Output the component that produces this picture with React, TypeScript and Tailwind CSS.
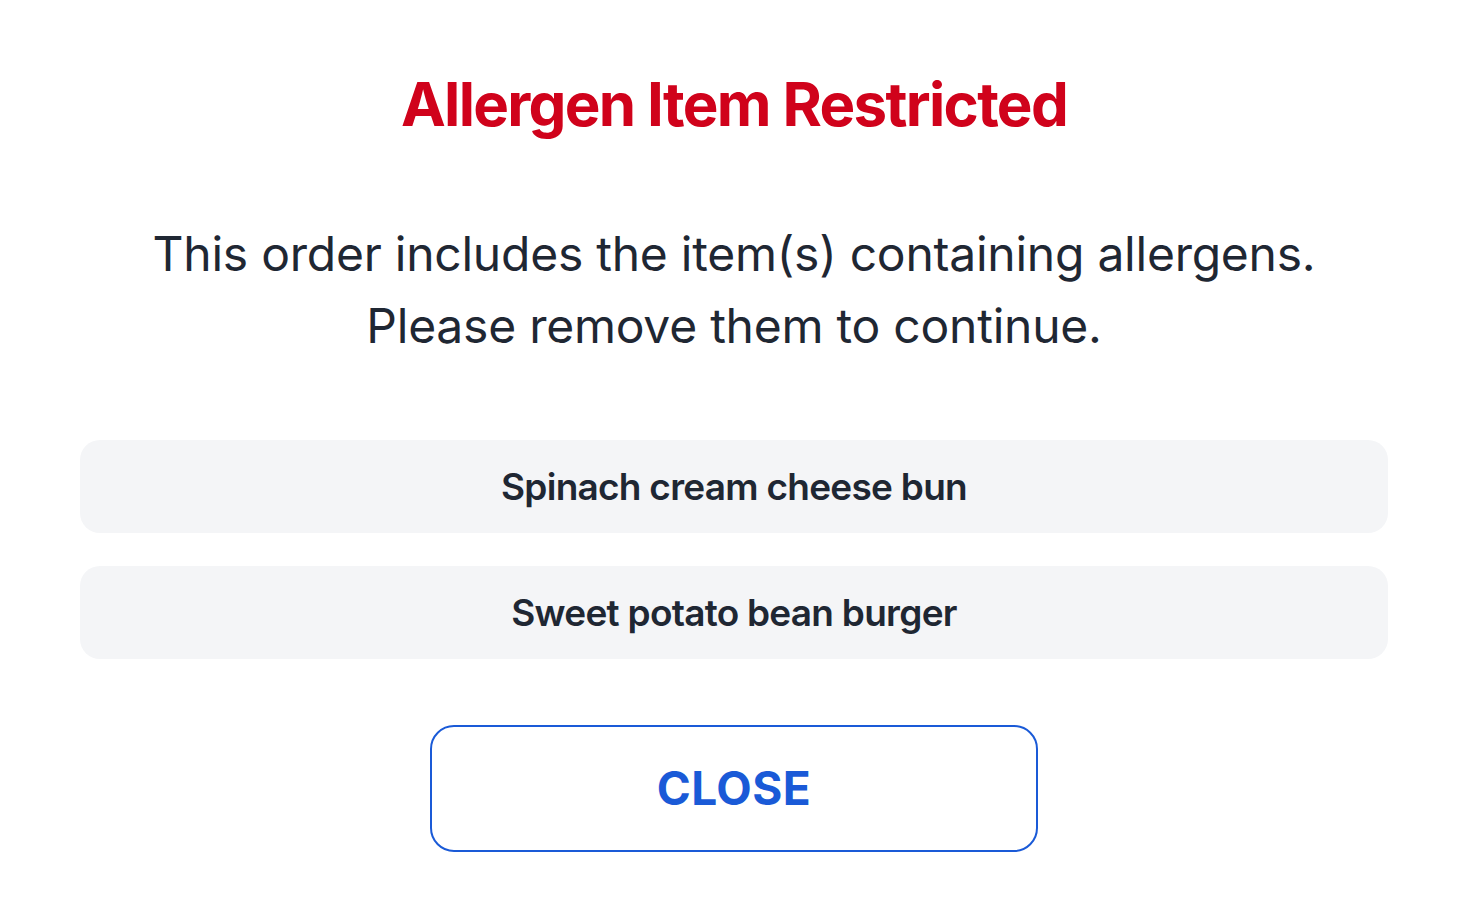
const items = ["Spinach cream cheese bun", "Sweet potato bean burger"];

export default function App() {
  return (
    <div
      className="min-h-screen w-full bg-white px-20 flex flex-col items-center"
      style={{ fontFamily: "Inter, 'Noto Sans', sans-serif" }}
    >
      <h1 className="mt-[72px] text-[60px] leading-[64px] font-bold tracking-[-0.028em] text-[#d0021b]">
        Allergen Item Restricted
      </h1>
      <p className="mt-[82px] text-center text-[48px] leading-[72px] font-normal tracking-[-0.005em] text-[#1f2733]">
        This order includes the item(s) containing allergens.
        <br />
        Please remove them to continue.
      </p>
      <div className="mt-[78px] w-full flex flex-col gap-[33px]">
        {items.map((name) => (
          <div
            key={name}
            className="h-[93px] w-full rounded-[20px] bg-[#f4f5f7] flex items-center justify-center text-[37px] font-semibold tracking-[-0.02em] text-[#1f2733]"
          >
            {name}
          </div>
        ))}
      </div>
      <button className="mt-[66px] h-[127px] w-[608px] rounded-[24px] border-2 border-[#1a5ad7] bg-white text-[46px] font-bold tracking-[0.01em] text-[#1a5ad7]">
        CLOSE
      </button>
    </div>
  );
}
